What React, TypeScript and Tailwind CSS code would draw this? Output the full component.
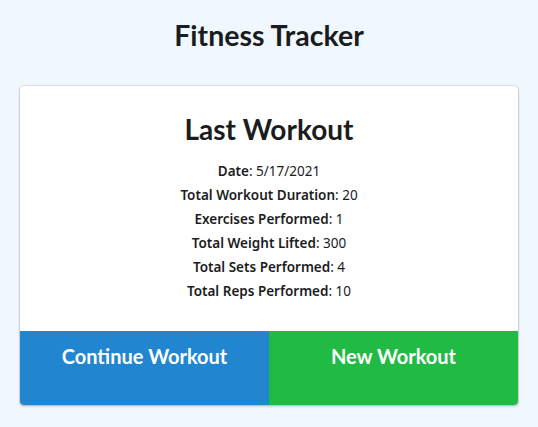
import React from 'react';

const stats = [
  { label: 'Date', value: '5/17/2021' },
  { label: 'Total Workout Duration', value: '20' },
  { label: 'Exercises Performed', value: '1' },
  { label: 'Total Weight Lifted', value: '300' },
  { label: 'Total Sets Performed', value: '4' },
  { label: 'Total Reps Performed', value: '10' },
];

export default function App() {
  return (
    <div className="min-h-[427px] bg-[#f0f7ff] px-5 pt-[18px] pb-6 font-['Lato',sans-serif] text-[#1b1c1d]">
      <h1 className="text-center text-[28.5px] font-bold leading-[34px]">Fitness Tracker</h1>

      <div className="mt-[34px] overflow-hidden rounded-[4px] bg-white shadow-[0_1px_3px_0_rgba(0,0,0,0.25),0_0_0_1px_rgba(34,36,38,0.08)]">
        <div className="px-4 pt-[26px] pb-[28px] text-center">
          <h2 className="text-[28px] font-bold leading-[34px]">Last Workout</h2>
          <ul className="mt-[13px] font-['Noto_Sans',sans-serif] text-[13.5px] leading-[24px]">
            {stats.map((s) => (
              <li key={s.label}>
                <span className="font-semibold">{s.label}</span>: {s.value}
              </li>
            ))}
          </ul>
        </div>
        <div className="flex h-[74px]">
          <button className="flex-1 bg-[#2185d0] pb-[25px] text-[20px] font-bold text-white">Continue Workout</button>
          <button className="flex-1 bg-[#21ba45] pb-[25px] text-[20px] font-bold text-white">New Workout</button>
        </div>
      </div>
    </div>
  );
}
